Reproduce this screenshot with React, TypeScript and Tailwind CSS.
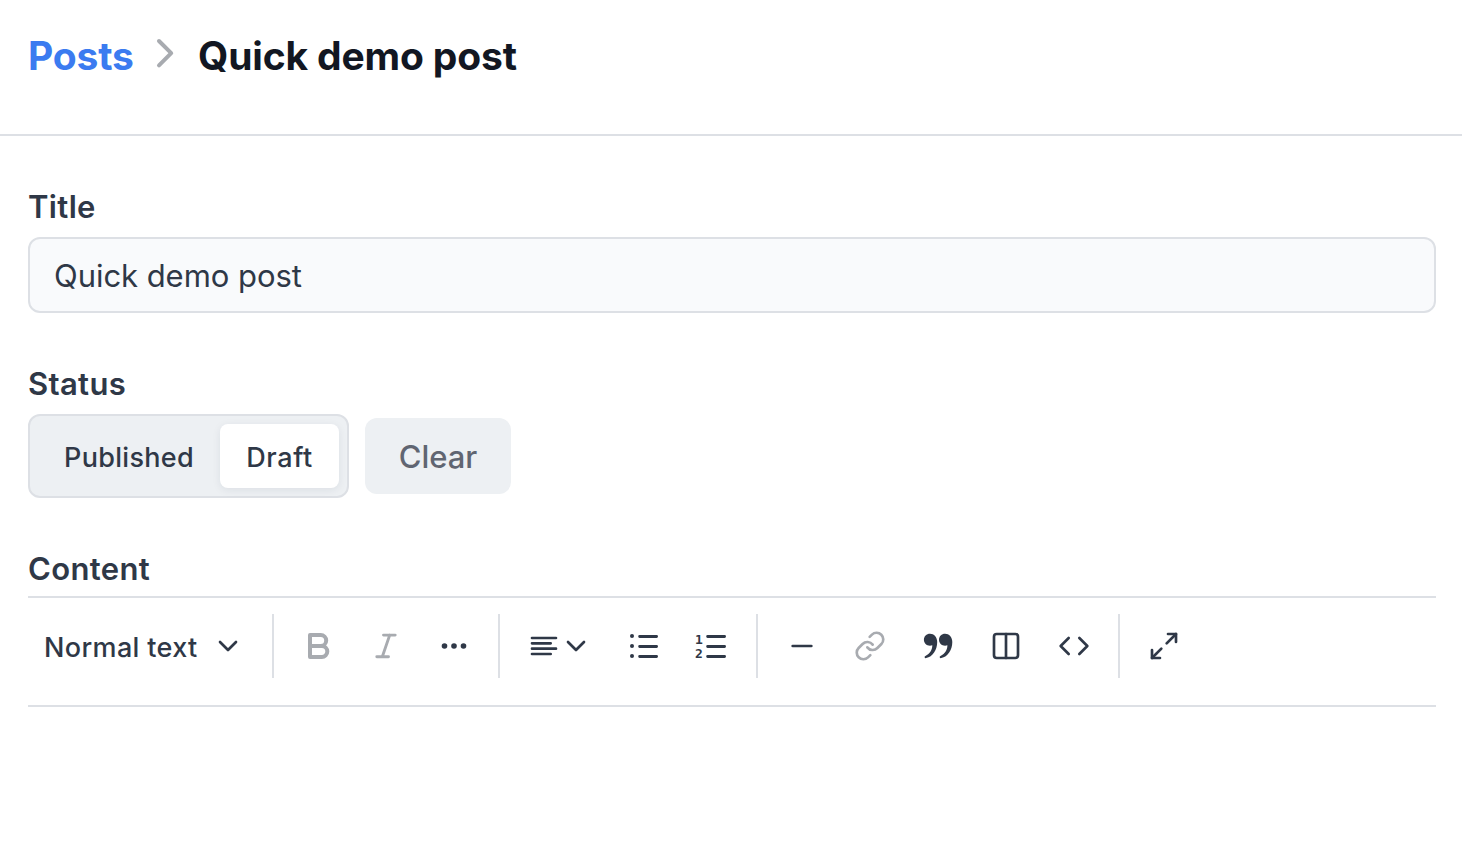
import type { ReactNode } from "react";
import { ChevronDown, Code, Columns2, Link, Maximize2 } from "lucide-react";

function Tool({ label, children, wide = false, muted = false }: { label: string; children: ReactNode; wide?: boolean; muted?: boolean }) {
  return (
    <button
      type="button"
      aria-label={label}
      className={`flex h-16 shrink-0 items-center justify-center ${wide ? "w-[100px]" : "w-[68px]"} ${muted ? "text-[#a8abb0]" : "text-[#2f3847]"}`}
    >
      {children}
    </button>
  );
}

function Glyph({ children, strokeWidth = 2.67 }: { children: ReactNode; strokeWidth?: number }) {
  return (
    <svg width="40" height="40" viewBox="0 0 40 40" fill="none" stroke="currentColor" strokeWidth={strokeWidth} strokeLinecap="round" strokeLinejoin="round">
      {children}
    </svg>
  );
}

function Divider() {
  return <div className="mx-[10px] h-16 w-0.5 shrink-0 bg-[#dde0e5]" />;
}

function Label({ children }: { children: ReactNode }) {
  return <div className="h-10 pt-px text-[31px] leading-[40px] font-semibold tracking-[0.35px] text-[#2f3847]">{children}</div>;
}

function QuoteMark() {
  return <path d="M12 7.700c4 0 7.200 3.300 7.200 8.300 0 8-4.600 14.800-11 16.100-1.600.3-2.300-1.400-.8-2.100 4.600-2.200 6.900-6 6.900-10.700-4.800 1.400-8.400-1.700-8.400-5.600 0-3.400 2.600-6 6.100-6z" />;
}

export default function App() {
  return (
    <div className="flex h-[848px] w-[1462px] flex-col overflow-hidden bg-white font-['Inter',sans-serif]">
      <header className="flex h-[136px] shrink-0 items-start border-b-2 border-[#dde0e5] pt-8 pl-7 text-[39px] leading-[48px] font-bold">
        <a className="w-[106px] whitespace-nowrap tracking-[-0.15px] text-[#3b7bf0]">Posts</a>
        <svg className="mt-[4px] mr-4 ml-[14px] shrink-0" width="34" height="34" viewBox="0 0 34 34" fill="none" stroke="#a8abb0" strokeWidth="4" strokeLinecap="round" strokeLinejoin="round">
          <path d="M11 5l12.200 12.200L11 29.400" />
        </svg>
        <h1 className="whitespace-nowrap tracking-[-0.15px] text-[#121722]">Quick demo post</h1>
      </header>

      <main className="flex flex-col gap-[50px] pt-[50px] pr-[26px] pl-7">
        <section className="flex flex-col gap-[11px]">
          <Label>Title</Label>
          <div className="flex h-[76px] items-center rounded-xl border-2 border-[#dde0e5] bg-[#f9fafc] px-6 pt-0.5 text-[31px] tracking-[-0.05px] text-[#2f3847]">
            Quick demo post
          </div>
        </section>

        <section className="flex flex-col gap-[11px]">
          <Label>Status</Label>
          <div className="flex items-center gap-4">
            <div className="flex h-[84px] w-[321px] items-center rounded-xl border-2 border-[#dde0e5] bg-[#edf0f3] p-2 text-[27px] font-medium tracking-[0.3px] text-[#2f3847]">
              <div className="flex h-16 w-[182px] items-center justify-center pt-1">Published</div>
              <div className="flex h-16 w-[119px] items-center justify-center rounded-lg bg-white pt-1 tracking-[0.6px] shadow-[0_2px_8px_rgba(30,40,60,0.08)]">Draft</div>
            </div>
            <button type="button" className="flex h-[76px] w-[146px] items-center justify-center rounded-xl bg-[#edf0f3] pt-0.5 text-[31px] font-medium text-[#606571]">
              Clear
            </button>
          </div>
        </section>

        <section className="flex flex-col gap-2">
          <Label>Content</Label>
          <div className="flex h-[111px] items-start border-y-2 border-[#dde0e5] pt-4">
            <button type="button" className="flex h-16 w-[234px] shrink-0 items-center justify-between pr-[18px] pl-4 text-[27px] font-medium tracking-[0.35px] text-[#2f3847]">
              <span className="pt-1">Normal text</span>
              <ChevronDown size={32} />
            </button>
            <Divider />
            <Tool label="Bold" muted>
              <Glyph strokeWidth={4}>
                <path d="M12 20V9h10.700a5.500 5.500 0 0 1 0 11H12v11h11.800a5.500 5.500 0 0 0 0-11h-1.100" />
              </Glyph>
            </Tool>
            <Tool label="Italic" muted>
              <Glyph strokeWidth={2.9}>
                <path d="M17.500 9.100h11.700M10.800 30.700h11.700M23.700 9.100l-7.400 21.600" />
              </Glyph>
            </Tool>
            <Tool label="More formatting">
              <Glyph>
                <g fill="currentColor" stroke="none">
                  <circle cx="10.500" cy="20" r="2.800" />
                  <circle cx="20" cy="20" r="2.800" />
                  <circle cx="29.500" cy="20" r="2.800" />
                </g>
              </Glyph>
            </Tool>
            <Divider />
            <Tool label="Text alignment" wide>
              <svg width="60" height="40" viewBox="0 0 60 40" fill="none" stroke="currentColor" strokeWidth="2.670" strokeLinecap="round" strokeLinejoin="round">
                <path d="M2 12h24M2 17.330h18.700M2 22.670h24M2 28h18.700M38 16l8 8 8-8" />
              </svg>
            </Tool>
            <Tool label="Bullet list">
              <Glyph strokeWidth={2.8}>
                <path d="M15.600 10.500h17M15.600 20.500h17M15.600 30.500h17" />
                <g fill="currentColor" stroke="none">
                  <circle cx="8" cy="10" r="2" />
                  <circle cx="8" cy="20" r="2" />
                  <circle cx="8" cy="30" r="2" />
                </g>
              </Glyph>
            </Tool>
            <Tool label="Numbered list">
              <Glyph strokeWidth={2.8}>
                <path d="M15.600 10.500h17M15.600 20.500h17M15.600 30.500h17" />
                <g fill="currentColor" stroke="none" className="font-['DejaVu_Sans_Mono',monospace] text-[13px] font-bold" textAnchor="middle">
                  <text x="7" y="18">1</text>
                  <text x="7" y="32">2</text>
                </g>
              </Glyph>
            </Tool>
            <Divider />
            <Tool label="Horizontal rule">
              <Glyph>
                <path d="M10.670 20h18.660" />
              </Glyph>
            </Tool>
            <Tool label="Link" muted>
              <Link size={32} />
            </Tool>
            <Tool label="Quote">
              <Glyph>
                <g fill="currentColor" stroke="none">
                  <QuoteMark />
                  <g transform="translate(15.100 0)">
                    <QuoteMark />
                  </g>
                </g>
              </Glyph>
            </Tool>
            <Tool label="Columns">
              <Columns2 size={32} />
            </Tool>
            <Tool label="Code">
              <Code size={32} />
            </Tool>
            <Divider />
            <Tool label="Expand">
              <Maximize2 size={32} />
            </Tool>
          </div>
        </section>
      </main>
    </div>
  );
}
